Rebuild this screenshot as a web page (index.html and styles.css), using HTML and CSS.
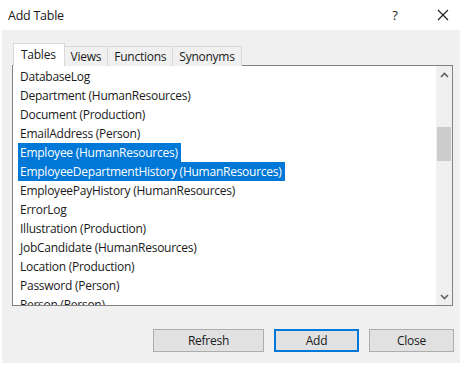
FILE: index.html
```html
<!DOCTYPE html>
<html lang="en">
<head>
  <meta charset="UTF-8" />
  <title>Add Table</title>
  <link rel="stylesheet" href="styles.css">
</head>
<body>
  <div class="dialog">
    <div class="title-bar">
      <span class="title">Add Table</span>
      <span class="help">?</span>
      <span class="close-x">
        <svg width="12" height="12" viewBox="0 0 12 12"><path d="M1 1 L11 11 M11 1 L1 11" stroke="#1a1a1a" stroke-width="1.1" fill="none"/></svg>
      </span>
    </div>

    <div class="panel">
      <div class="tabs">
        <div class="tab active">Tables</div>
        <div class="tab">Views</div>
        <div class="tab">Functions</div>
        <div class="tab">Synonyms</div>
      </div>

      <div class="list-box">
        <ul class="items">
          <li><span>DatabaseLog</span></li>
          <li><span>Department (HumanResources)</span></li>
          <li><span>Document (Production)</span></li>
          <li><span>EmailAddress (Person)</span></li>
          <li class="selected"><span>Employee (HumanResources)</span></li>
          <li class="selected"><span>EmployeeDepartmentHistory (HumanResources)</span></li>
          <li><span>EmployeePayHistory (HumanResources)</span></li>
          <li><span>ErrorLog</span></li>
          <li><span>Illustration (Production)</span></li>
          <li><span>JobCandidate (HumanResources)</span></li>
          <li><span>Location (Production)</span></li>
          <li><span>Password (Person)</span></li>
          <li><span>Person (Person)</span></li>
        </ul>
        <div class="scrollbar">
          <div class="arrow">
            <svg width="9" height="6" viewBox="0 0 9 6"><path d="M1 5 L4.5 1.5 L8 5" stroke="#606060" stroke-width="1.6" fill="none"/></svg>
          </div>
          <div class="track"><div class="thumb"></div></div>
          <div class="arrow">
            <svg width="9" height="6" viewBox="0 0 9 6"><path d="M1 1 L4.5 4.5 L8 1" stroke="#606060" stroke-width="1.6" fill="none"/></svg>
          </div>
        </div>
      </div>

      <div class="buttons">
        <button class="btn wide">Refresh</button>
        <button class="btn default">Add</button>
        <button class="btn">Close</button>
      </div>
    </div>
  </div>
</body>
</html>
```

FILE: styles.css
```css
body {
  margin: 0;
  background: white;
  font-family: "Open Sans", "Noto Sans", sans-serif;
  font-size: 12px;
  letter-spacing: -0.25px;
  color: #1a1a1a;
}

.dialog {
  width: 462px;
  height: 365px;
  display: flex;
  flex-direction: column;
}

.title-bar {
  height: 30px;
  display: flex;
  align-items: center;
  padding-left: 8px;
}

.title {
  flex: 1;
  font-size: 12.5px;
}

.help {
  width: 20px;
  text-align: center;
  font-size: 13px;
  margin-right: 19px;
}

.close-x {
  width: 38px;
  display: flex;
  justify-content: center;
}

.panel {
  flex: 1;
  margin: 0 2px 2px;
  background: #f0f0f0;
  padding: 13px 6px 0 10px;
  display: flex;
  flex-direction: column;
}

.tabs {
  display: flex;
  align-items: flex-end;
  height: 23px;
  padding-left: 1px;
  position: relative;
  margin-bottom: -1px;
  z-index: 1;
}

.tab {
  height: 20px;
  line-height: 19px;
  padding: 0 6px;
  border: 1px solid #d9d9d9;
  border-bottom: none;
  border-left: none;
  background: #f0f0f0;
  box-sizing: border-box;
}

.tab.active {
  height: 23px;
  line-height: 22px;
  background: white;
  border-left: 1px solid #d9d9d9;
  padding: 0 8px 0 7px;
}

.list-box {
  height: 241px;
  margin-right: 1px;
  border: 1px solid #828282;
  background: white;
  display: flex;
  box-sizing: border-box;
}

.items {
  flex: 1;
  list-style: none;
  margin: 0;
  padding: 1px 0 0 5px;
  overflow: hidden;
}

.items li {
  height: 19px;
  line-height: 19px;
  white-space: nowrap;
}

.items li span {
  display: inline-block;
  padding: 0 3px 0 2px;
}

.items li.selected span {
  background: #0078d7;
  color: white;
}

.scrollbar {
  width: 16px;
  background: #f0f0f0;
  display: flex;
  flex-direction: column;
}

.arrow {
  height: 17px;
  display: flex;
  align-items: center;
  justify-content: center;
}

.track {
  flex: 1;
}

.thumb {
  margin: 44px 1px 0;
  height: 34px;
  background: #cdcdcd;
}

.buttons {
  display: flex;
  justify-content: flex-end;
  gap: 10px;
  margin-top: 23px;
}

.btn {
  width: 85px;
  height: 23px;
  background: #e1e1e1;
  border: 1px solid #adadad;
  font-family: "Open Sans", "Noto Sans", sans-serif;
  font-size: 12px;
  letter-spacing: -0.25px;
  color: #1a1a1a;
  padding: 0;
}

.btn.wide {
  width: 111px;
}

.btn.default {
  border: 2px solid #0078d7;
}
```
